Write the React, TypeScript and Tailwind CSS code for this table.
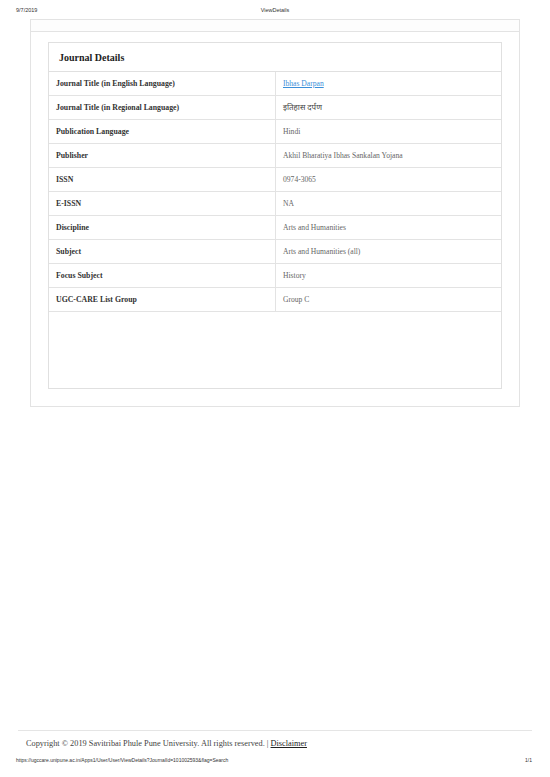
import React from "react";

const rows: [string, React.ReactNode][] = [
  ["Journal Title (in English Language)", <a className="text-[#3b8fd9] underline">Ibhas Darpan</a>],
  ["Journal Title (in Regional Language)", <span className="text-[8px] text-[#444]" style={{ fontFamily: '"Noto Sans Devanagari","Noto Sans","Lohit Devanagari",sans-serif' }}>इतिहास दर्पण</span>],
  ["Publication Language", "Hindi"],
  ["Publisher", "Akhil Bharatiya Ibhas Sankalan Yojana"],
  ["ISSN", "0974-3065"],
  ["E-ISSN", "NA"],
  ["Discipline", "Arts and Humanities"],
  ["Subject", "Arts and Humanities (all)"],
  ["Focus Subject", "History"],
  ["UGC-CARE List Group", "Group C"],
];

export default function App() {
  return (
    <div className="w-[550px] h-[777px] bg-white flex flex-col relative overflow-hidden" style={{ fontFamily: '"Liberation Serif", serif' }}>
      <div className="h-[20px] flex items-center justify-between px-[16px] text-[5.5px] text-[#333]" style={{ fontFamily: '"Liberation Sans", sans-serif' }}>
        <span className="w-[60px]">9/7/2019</span>
        <span>ViewDetails</span>
        <span className="w-[60px]"></span>
      </div>
      <div className="ml-[30px] -mt-[1px] w-[490px] h-[388px] border border-[#e3e3e3] flex flex-col">
        <div className="h-[12px] border-b border-[#e3e3e3] bg-[#fdfdfd]"></div>
        <div className="mx-[17px] mt-[10px] h-[347px] border border-[#e0e0e0] flex flex-col">
          <div className="h-[29px] flex items-center pl-[10px] text-[10px] font-bold text-[#222] border-b border-[#e0e0e0]">
            Journal Details
          </div>
          <div className="flex flex-col">
            {rows.map(([k, v], i) => (
              <div key={i} className="h-[24px] flex border-b border-[#e3e3e3]">
                <div className="w-[227px] border-r border-[#e3e3e3] flex items-center pl-[7px] font-bold text-[#333] text-[7.8px]">{k}</div>
                <div className="flex-1 flex items-center pl-[7px] text-[#666] text-[7.6px]">{v}</div>
              </div>
            ))}
          </div>
        </div>
      </div>
      <div className="flex-1"></div>
      <div className="mx-[18px] border-t border-[#e5e5e5]"></div>
      <div className="h-[26px] flex items-center pl-[26px] text-[8.3px] text-[#444]">
        <span>Copyright © 2019 Savitribai Phule Pune University. All rights reserved. | <span className="underline text-[#222]">Disclaimer</span></span>
      </div>
      <div className="h-[20px] flex items-start justify-between px-[16px] text-[5px] text-[#333]" style={{ fontFamily: '"Liberation Sans", sans-serif' }}>
        <span>https://ugccare.unipune.ac.in/Apps1/User/User/ViewDetails?JournalId=101002593&flag=Search</span>
        <span className="pr-[2px]">1/1</span>
      </div>
    </div>
  );
}
